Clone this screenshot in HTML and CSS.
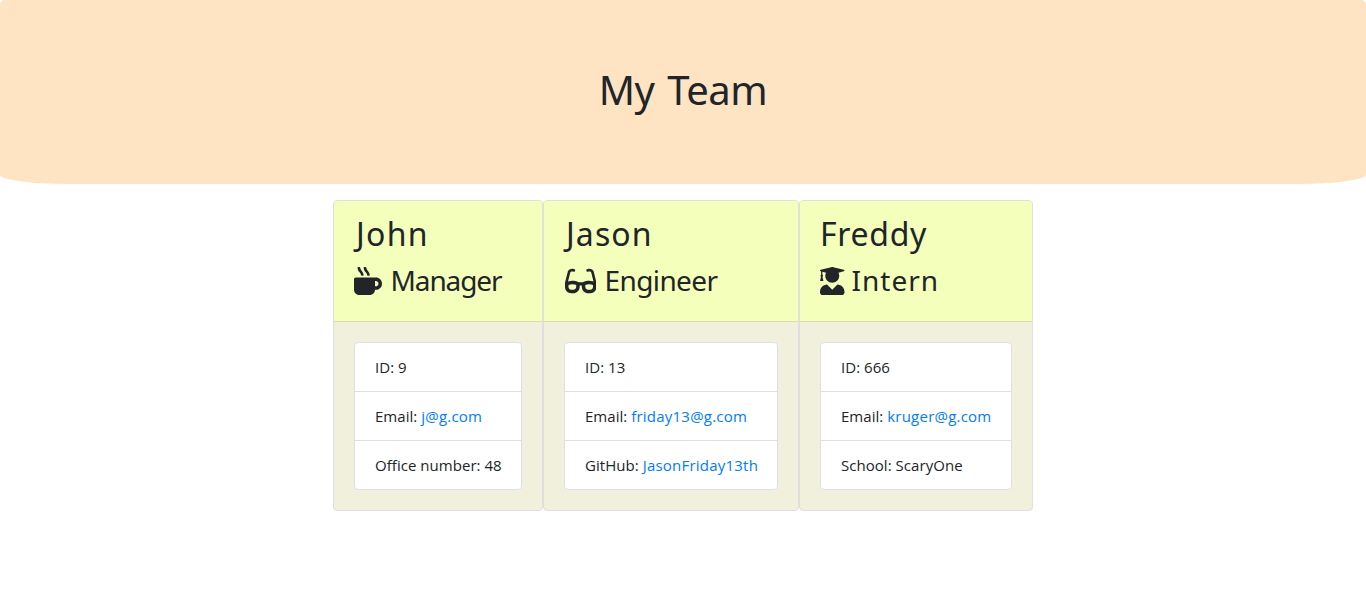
FILE: index.html
```html
<!DOCTYPE html>
<html lang="en">
<head>
<meta charset="utf-8">
<title>My Team</title>
<link rel="stylesheet" href="styles.css">
</head>
<body>
<header class="hero"><h1 class="hero-title">My Team</h1></header>
<main class="team">
  <section class="card">
    <div class="card-header">
      <h2 class="name name-john">John</h2>
      <h3 class="role role-manager"><svg class="icon icon-mug" viewBox="0 0 512 512"><path d="M127.1 146.5c1.3 7.7 8 13.5 16 13.5h16.5c9.8 0 17.6-8.5 16.3-18-3.8-28.2-16.4-54.2-36.6-74.7-14.4-14.7-23.6-33.3-26.4-53.5C111.8 5.9 105 0 96.8 0H80.4C70.6 0 63 8.5 64.1 18c3.9 31.9 18 61.3 40.6 84.4 12 12.2 19.7 27.5 22.4 44.1zm112 0c1.3 7.7 8 13.5 16 13.5h16.5c9.8 0 17.6-8.5 16.3-18-3.8-28.2-16.4-54.2-36.6-74.7-14.4-14.7-23.6-33.3-26.4-53.5C223.8 5.9 217 0 208.8 0h-16.4c-9.8 0-17.5 8.5-16.3 18 3.9 31.9 18 61.3 40.6 84.4 12 12.2 19.7 27.5 22.4 44.1zM400 192H32c-17.7 0-32 14.3-32 32v192c0 53 43 96 96 96h192c53 0 96-43 96-96h16c61.8 0 112-50.2 112-112s-50.2-112-112-112zm0 160h-16v-96h16c26.5 0 48 21.5 48 48s-21.5 48-48 48z"/></svg><span>Manager</span></h3>
    </div>
    <div class="card-body">
      <ul class="list">
        <li class="item">ID: 9</li>
        <li class="item">Email: <a class="link" href="mailto:j@g.com">j@g.com</a></li>
        <li class="item">Office number: 48</li>
      </ul>
    </div>
  </section>
  <section class="card">
    <div class="card-header">
      <h2 class="name name-jason">Jason</h2>
      <h3 class="role role-engineer"><svg class="icon icon-glasses" viewBox="0 0 576 512"><path d="M574.1 280.37L528.75 98.66c-5.91-23.7-21.59-44.05-43-55.81-21.44-11.73-46.97-14.11-70.19-6.33l-15.25 5.08c-8.39 2.79-12.92 11.86-10.12 20.24l5.06 15.18c2.79 8.38 11.85 12.91 20.23 10.12l13.18-4.39c10.87-3.62 23-3.57 33.16 1.73 10.29 5.37 17.57 14.56 20.37 25.82l38.46 153.82c-22.19-6.81-49.79-12.46-81.2-12.46-34.77 0-73.98 7.02-114.85 26.74h-73.18c-40.87-19.74-80.08-26.75-114.86-26.75-31.42 0-59.02 5.65-81.21 12.46l38.46-153.83c2.79-11.25 10.09-20.45 20.38-25.81 10.16-5.3 22.28-5.35 33.15-1.73l13.17 4.39c8.38 2.79 17.44-1.74 20.23-10.12l5.06-15.18c2.8-8.38-1.73-17.45-10.12-20.24l-15.25-5.08c-23.22-7.78-48.75-5.41-70.19 6.33-21.41 11.77-37.09 32.11-43 55.81L1.9 280.37A64.218 64.218 0 0 0 0 295.86v70.25C0 429.01 51.58 480 115.2 480h37.12c60.28 0 110.37-45.94 114.88-105.37l2.93-38.63h35.75l2.93 38.63C313.31 434.06 363.4 480 423.68 480h37.12c63.62 0 115.2-50.99 115.2-113.88v-70.25c0-5.23-.64-10.43-1.9-15.5zm-370.72 89.42c-1.97 25.91-24.4 46.21-51.06 46.21H115.2C86.97 416 64 393.62 64 366.11v-37.54c18.12-6.49 43.42-12.92 72.58-12.92 23.86 0 47.26 4.33 69.93 12.92l-3.13 41.22zM512 366.12c0 27.51-22.97 49.88-51.2 49.88h-37.12c-26.67 0-49.1-20.3-51.06-46.21l-3.13-41.22c22.67-8.59 46.08-12.92 69.95-12.92 29.12 0 54.43 6.44 72.55 12.93v37.54z"/></svg><span>Engineer</span></h3>
    </div>
    <div class="card-body">
      <ul class="list">
        <li class="item">ID: 13</li>
        <li class="item">Email: <a class="link" href="mailto:friday13@g.com">friday13@g.com</a></li>
        <li class="item">GitHub: <a class="link" href="#">JasonFriday13th</a></li>
      </ul>
    </div>
  </section>
  <section class="card">
    <div class="card-header">
      <h2 class="name name-freddy">Freddy</h2>
      <h3 class="role role-intern"><svg class="icon icon-graduate" viewBox="0 0 448 512"><path d="M319.4 320.6L224 416l-95.4-95.4C57.1 323.7 0 382.2 0 454.4v9.6c0 26.5 21.5 48 48 48h352c26.5 0 48-21.5 48-48v-9.6c0-72.2-57.1-130.7-128.6-133.8zM13.6 79.8l6.4 1.5v58.4c-7 4.2-12 11.5-12 20.3 0 8.4 4.6 15.4 11.1 19.7L3.5 242c-1.7 6.9 2.1 14 7.6 14h41.8c5.5 0 9.3-7.1 7.6-14l-15.6-62.3C51.4 175.4 56 168.4 56 160c0-8.8-5-16.1-12-20.3V87.1l66 15.9c-8.6 17.2-14 36.4-14 57 0 70.7 57.3 128 128 128s128-57.3 128-128c0-20.6-5.3-39.8-14-57l96.3-23.2c18.2-4.4 18.2-27.1 0-31.5l-190.4-46c-13-3.1-26.7-3.1-39.7 0L13.6 48.2c-18.1 4.4-18.1 27.2 0 31.6z"/></svg><span>Intern</span></h3>
    </div>
    <div class="card-body">
      <ul class="list">
        <li class="item">ID: 666</li>
        <li class="item">Email: <a class="link" href="mailto:kruger@g.com">kruger@g.com</a></li>
        <li class="item">School: ScaryOne</li>
      </ul>
    </div>
  </section>
</main>
</body>
</html>
```

FILE: styles.css
```css
* { box-sizing: border-box; }
body { margin: 0; background: #fff; color: #212529; font: 400 16px/24px "Segoe UI", "Open Sans", sans-serif; }
h1, h2, h3, ul { margin: 0; padding: 0; font-weight: 400; }
.hero { height: 184px; padding-top: 66px; margin-bottom: 16px; background: #ffe4c4; border-radius: 4.8px 4.8px 5% 5% / 4.8px 4.8px 5% 5%; text-align: center; }
.hero-title, .name, .role { font-family: "Comic Sans MS", "Noto Sans", sans-serif; }
.hero-title { font-size: 40px; line-height: 48px; word-spacing: 3px; letter-spacing: -0.5px; }
.team { display: grid; grid-template-columns: 210px 256px 234px; justify-content: center; }
.card { height: 311px; border: 1px solid #dfdfdf; border-radius: 4px; background: #f0f0dc; overflow: hidden; }
.card-header { height: 121px; padding: 14px 20px 0; background: #f3ffbb; border-bottom: 1px solid #d5dfa9; }
.name { font-size: 32px; line-height: 38px; margin-bottom: 10px; }
.name-john { padding-left: 2px; letter-spacing: 1.3px; }
.name-jason { padding-left: 2px; letter-spacing: 1.1px; }
.name-freddy { letter-spacing: 0.7px; }
.role { display: flex; font-size: 28px; line-height: 34px; }
.role-manager { letter-spacing: -1.1px; }
.role-engineer { letter-spacing: -0.6px; }
.role-intern { letter-spacing: 1px; }
.icon { height: 28px; margin-top: 3.5px; margin-right: 8.5px; fill: currentColor; flex: none; }
.icon-mug { width: 28px; }
.icon-glasses { width: 31.5px; margin-left: 0.5px; }
.icon-graduate { width: 24.5px; margin-right: 7px; }
.card-body { padding: 20px; }
.list { list-style: none; background: #fff; border: 1px solid #dfdfdf; border-radius: 4px; }
.item { height: 49px; padding: 12px 0 12px 20px; border-bottom: 1px solid #dfdfdf; font-size: 15px; letter-spacing: 0.04px; white-space: nowrap; }
.item:last-child { height: 48px; border-bottom: 0; }
.link { color: #007bff; letter-spacing: 0.22px; text-decoration: none; }
```
